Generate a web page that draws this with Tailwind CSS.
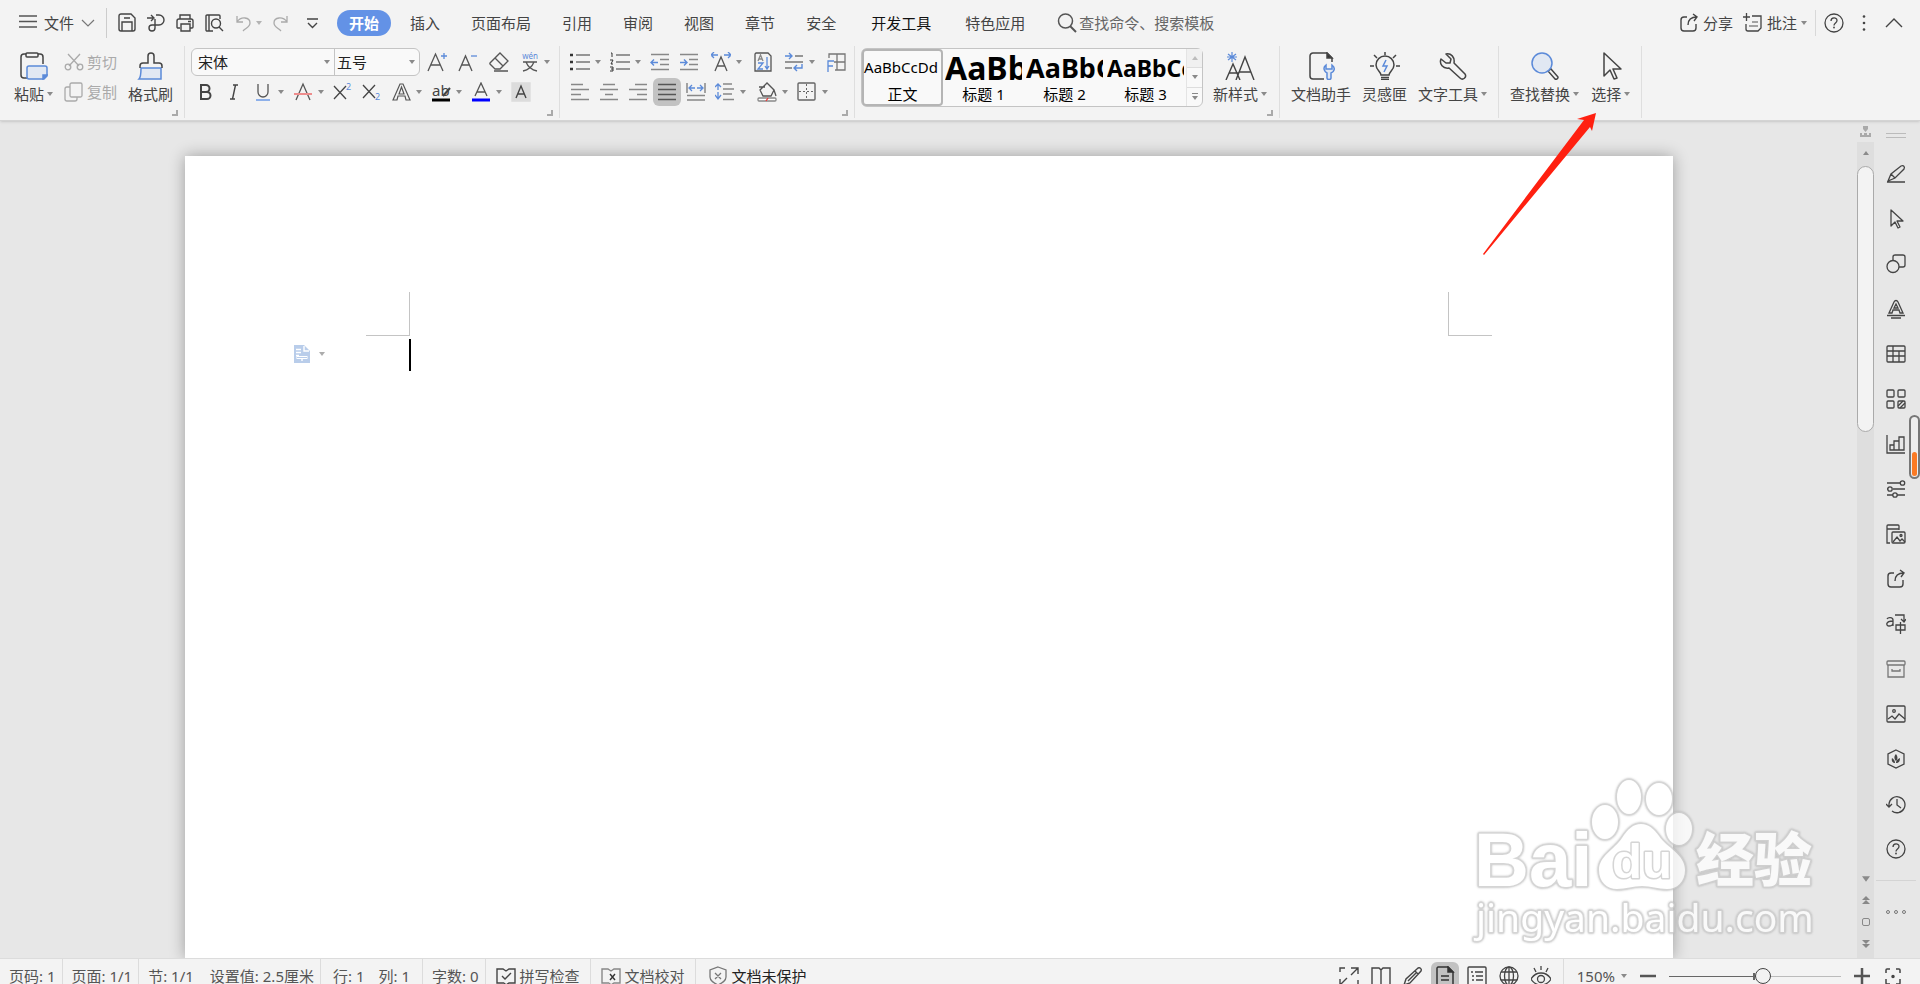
<!DOCTYPE html>
<html lang="zh-CN">
<head>
    <meta charset="UTF-8">
    <meta name="viewport" content="width=device-width, initial-scale=1.0">
    <title>文字文稿1</title>
    <script src="https://cdn.jsdelivr.net/npm/@tailwindcss/browser@4"></script>
</head>
<body class="relative flex h-screen flex-col overflow-hidden bg-[#e7e7e7] font-['Noto_Sans','Noto_Sans_CJK_SC',sans-serif] text-[15px] leading-5 text-[#444]">

    <!-- Shared shapes -->
    <svg class="hidden">
        <symbol id="caret" viewBox="0 0 6 4"><path d="M0 0h6L3 4z" fill="#8a8a8a"/></symbol>
        <symbol id="corner" viewBox="0 0 6 6"><path d="M5 0v5H0" fill="none" stroke="#aaa" stroke-width="2"/></symbol>
        <symbol id="share" viewBox="0 0 20 20"><path d="M8 4H5a3 3 0 0 0-3 3v8a3 3 0 0 0 3 3h9a3 3 0 0 0 3-3v-4M9 12c0-5 3-8 9-8M14 1l4 3-3 4" fill="none" stroke="#444" stroke-width="1.4"/></symbol>
        <symbol id="help" viewBox="0 0 20 20"><g fill="none" stroke="#444" stroke-width="1.3"><circle cx="10" cy="10" r="9"/><path d="M7 8c0-4 6-4 6-.5 0 2.500-3 2.500-3 5"/></g><circle cx="10" cy="14.500" r=".9" fill="#444"/></symbol>
    </svg>

    <header class="relative z-10 shrink-0 border-b border-[#d4d4d4] bg-[#f3f3f3] shadow">
        <!-- Menu bar -->
        <div class="flex h-[46px] items-center py-0.5 pr-4">
            <button class="flex items-center gap-1.5 pl-[18px]">
                <svg class="h-5 w-5" viewBox="0 0 20 20" fill="none" stroke="#555" stroke-width="1.300"><path d="M1 3h18M1 8.500h18M1 14h18"/></svg>
                <span>文件</span>
                <svg class="h-5 w-4" viewBox="0 0 16 20" fill="none" stroke="#777" stroke-width="1.200"><path d="M2 7l6 6 6-6"/></svg>
            </button>
            <span class="mx-2.5 h-[30px] w-px bg-[#ccc]"></span>

            <div class="flex items-center gap-[9px]">
                <button aria-label="保存"><svg class="h-5 w-5" viewBox="0 0 20 20" fill="none" stroke="#444" stroke-width="1.400"><path d="M4 1h10l4 4v11a2 2 0 0 1-2 2H4a2 2 0 0 1-2-2V3a2 2 0 0 1 2-2zM5 18V9h10v9M7 5h6"/></svg></button>
                <button aria-label="输出为PDF"><svg class="h-5 w-5" viewBox="0 0 20 20" fill="none" stroke="#444" stroke-width="1.400"><path d="M1 5h6M5 2l3 3-3 3M10 2h3a5 5 0 0 1 0 10H6a3 3 0 1 0 3 3V6"/></svg></button>
                <button aria-label="打印"><svg class="h-5 w-5" viewBox="0 0 20 20" fill="none" stroke="#444" stroke-width="1.400"><path d="M5 6V2h10v4M5 15H3a1 1 0 0 1-1-1V8a2 2 0 0 1 2-2h12a2 2 0 0 1 2 2v6a1 1 0 0 1-1 1h-2M6 11h9v7H6zM13 8.500h3"/></svg></button>
                <button aria-label="打印预览"><svg class="h-5 w-5" viewBox="0 0 20 20" fill="none" stroke="#444" stroke-width="1.400"><path d="M9 18H3a1 1 0 0 1-1-1V3a1 1 0 0 1 1-1h12a1 1 0 0 1 1 1v3M5 2v16M15 14l4 4"/><circle cx="12" cy="10.500" r="4.500"/></svg></button>
                <button aria-label="撤消" class="flex items-center gap-[3px]">
                    <svg class="h-5 w-5" viewBox="0 0 20 20" fill="none" stroke="#aaa" stroke-width="1.300"><path d="M4 3v6h6M4 9c4-6 13-5 13 1 0 4-4 5-7 8"/></svg>
                    <svg class="h-1 w-1.5 opacity-60"><use href="#caret"/></svg>
                </button>
                <button aria-label="恢复"><svg class="h-5 w-5" viewBox="0 0 20 20" fill="none" stroke="#aaa" stroke-width="1.300"><path d="M16 3v6h-6M16 9C12 3 3 4 3 10c0 4 4 5 7 8"/></svg></button>
                <button aria-label="自定义" class="ml-0.5"><svg class="h-5 w-5" viewBox="0 0 20 20" fill="none" stroke="#444" stroke-width="1.400"><path d="M5 6h11M6 10l4.500 4.500L15 10"/></svg></button>
            </div>

            <nav class="ml-[15px] flex items-center gap-[7px]">
                <button class="rounded-full bg-[#6392e6] px-3 py-[3px] font-bold text-white">开始</button>
                <button class="px-3">插入</button>
                <button class="px-3">页面布局</button>
                <button class="px-3">引用</button>
                <button class="px-3">审阅</button>
                <button class="px-3">视图</button>
                <button class="px-3">章节</button>
                <button class="px-3">安全</button>
                <button class="ml-1 px-3 text-[#111]">开发工具</button>
                <button class="ml-[3px] px-3">特色应用</button>
            </nav>

            <label class="ml-5 flex items-center gap-0.5">
                <svg class="h-5 w-5" viewBox="0 0 20 20" fill="none" stroke="#555" stroke-width="1.500"><circle cx="8.500" cy="8" r="7"/><path d="M13 13l6 6" stroke-width="2"/></svg>
                <input type="text" aria-label="查找" placeholder="查找命令、搜索模板" class="w-40 placeholder:text-[#666]">
            </label>

            <div class="ml-auto flex items-center gap-2.5">
                <button class="flex items-center gap-1"><svg class="h-5 w-5"><use href="#share"/></svg>分享</button>
                <button class="flex items-center gap-1">
                    <svg class="h-5 w-5" viewBox="0 0 20 20" fill="none" stroke="#444" stroke-width="1.300"><path d="M0 4h7M3.500 0v8M9 3h9v12l-3 3H5a2 2 0 0 1-2-2v-5"/><path d="M9 9h6M6 13h9" stroke="#888"/></svg>
                    批注
                    <svg class="h-1 w-1.5"><use href="#caret"/></svg>
                </button>
                <span class="-mx-0.5 h-[26px] w-px bg-[#d8d8d8]"></span>
                <button aria-label="帮助"><svg class="h-5 w-5"><use href="#help"/></svg></button>
                <button aria-label="更多"><svg class="h-5 w-5" viewBox="0 0 20 20" fill="#444"><circle cx="10" cy="3.500" r="1.300"/><circle cx="10" cy="10" r="1.300"/><circle cx="10" cy="16.500" r="1.300"/></svg></button>
                <button aria-label="收起功能区"><svg class="h-5 w-5" viewBox="0 0 20 20" fill="none" stroke="#444" stroke-width="1.400"><path d="M2 14l8-8 8 8"/></svg></button>
            </div>
        </div>

        <!-- Ribbon -->
        <div class="flex h-[74px] pb-0.5">
            <!-- Clipboard -->
            <section class="relative flex gap-[11px] border-r border-[#dedede] pr-[11px] pl-[14px]">
                <button class="flex flex-col items-center gap-1 pt-1.5">
                    <svg class="h-7 w-7" viewBox="0 0 28 28" fill="none" stroke="#444" stroke-width="1.500"><path d="M8 26H4a3 3 0 0 1-3-3V5a3 3 0 0 1 3-3h16a3 3 0 0 1 3 3v7"/><rect x="6" y="1" width="12" height="4" rx="1" fill="#f3f3f3"/><path d="M7 16a2 2 0 0 1 2-2h16a2 2 0 0 1 2 2v8l-3 3H9a2 2 0 0 1-2-2z" fill="#e1e8f3" stroke="#5b8ad9"/><path d="M27 23l-4 4v-4z" fill="#5b8ad9" stroke="#5b8ad9"/></svg>
                    <span class="flex items-center gap-[3px]">粘贴<svg class="h-1 w-1.5"><use href="#caret"/></svg></span>
                </button>
                <div class="flex flex-col gap-2.5 pt-1.5 text-[#aaa]">
                    <button class="flex items-center gap-[3px]"><svg class="h-5 w-5" viewBox="0 0 20 20" fill="none" stroke="#aaa" stroke-width="1.300"><path d="M4 2l11 12M16 2L5 14"/><circle cx="4" cy="15" r="2.800"/><circle cx="16" cy="15" r="2.800"/></svg>剪切</button>
                    <button class="flex items-center gap-[3px]"><svg class="h-5 w-5" viewBox="0 0 20 20" fill="none" stroke="#aaa" stroke-width="1.300"><rect x="6" y="1" width="12" height="14" rx="1.500"/><path d="M6 5H3a2 2 0 0 0-2 2v10a2 2 0 0 0 2 2h8a2 2 0 0 0 2-2v-2"/></svg>复制</button>
                </div>
                <button class="flex flex-col items-center gap-1 pt-1.5">
                    <svg class="h-7 w-7" viewBox="0 0 28 28" fill="none" stroke="#444" stroke-width="1.500"><path d="M4 16h20v11H2c2-2 2-5 2-11z" fill="#e1e8f3" stroke="#5b8ad9"/><path d="M3 16v-2a3 3 0 0 1 3-3h5V4a3 3 0 0 1 6 0v7h5a3 3 0 0 1 3 3v2"/></svg>
                    <span>格式刷</span>
                </button>
                <svg class="absolute right-1.5 bottom-0.5 h-1.5 w-1.5"><use href="#corner"/></svg>
            </section>

            <!-- Font -->
            <section class="relative flex flex-col gap-0.5 border-r border-[#dedede] pt-0.5 pr-[9px] pl-1.5">
                <div class="flex h-7 items-center">
                    <div class="mr-[7px] flex h-7 rounded-md border border-[#c4c4c4] bg-[#f9f9f9] text-[#222]">
                        <label class="flex items-center border-r border-[#c4c4c4] pr-1">
                            <select aria-label="字体" class="w-[132px] appearance-none pl-1.5"><option>宋体</option></select>
                            <svg class="h-1 w-1.5"><use href="#caret"/></svg>
                        </label>
                        <label class="flex items-center pr-1">
                            <select aria-label="字号" class="w-[74px] appearance-none pl-0.5"><option>五号</option></select>
                            <svg class="h-1 w-1.5"><use href="#caret"/></svg>
                        </label>
                    </div>
                    <div class="flex items-center gap-[11px]">
                        <button aria-label="增大字号"><svg class="h-5 w-5" viewBox="0 0 20 20" fill="none" stroke="#555" stroke-width="1.300"><path d="M1 19L8.500 2 16 19M4 13h9"/><path d="M14 4h6M17 1v6" stroke="#5b8ad9"/></svg></button>
                        <button aria-label="减小字号"><svg class="h-5 w-5" viewBox="0 0 20 20" fill="none" stroke="#555" stroke-width="1.300"><path d="M1 19L7.500 4 14 19M3.500 13h8"/><path d="M13 4h6" stroke="#5b8ad9"/></svg></button>
                        <button aria-label="清除格式"><svg class="h-5 w-5" viewBox="0 0 20 20" fill="none" stroke="#555" stroke-width="1.300"><path d="M6 17l-5-5a1 1 0 0 1 0-1L11 1l8 8-8 8zM6 6l8 8M5 19h14"/></svg></button>
                        <button aria-label="拼音指南" class="flex items-center gap-1">
                            <svg class="h-5 w-5 overflow-visible" viewBox="0 0 20 20"><text x="10" y="7" font-size="8" text-anchor="middle" fill="#5b8ad9">wén</text><path d="M3 10h14M14 10c-2 5-6 8-11 9M6 10c2 5 6 8 11 9" fill="none" stroke="#555" stroke-width="1.300"/></svg>
                            <svg class="h-1 w-1.5"><use href="#caret"/></svg>
                        </button>
                    </div>
                </div>
                <div class="flex h-7 items-center gap-[9px] pl-1">
                    <button aria-label="加粗"><svg class="h-5 w-5" viewBox="0 0 20 20" fill="none" stroke="#444" stroke-width="2"><path d="M6 3h5a3.500 3.500 0 0 1 0 7H6zM6 10h6a3.500 3.500 0 0 1 0 7H6z"/></svg></button>
                    <button aria-label="倾斜"><svg class="h-5 w-5" viewBox="0 0 20 20" fill="none" stroke="#444" stroke-width="1.400"><path d="M9 3h5M6 17h5M11.500 3l-3 14"/></svg></button>
                    <button aria-label="下划线" class="flex items-center gap-[5px]"><svg class="h-5 w-5" viewBox="0 0 20 20" fill="none" stroke="#555" stroke-width="1.300"><path d="M5 2v8a5 5 0 0 0 10 0V2"/><path d="M3 18h14" stroke="#8db0ea" stroke-width="2"/></svg><svg class="h-1 w-1.5"><use href="#caret"/></svg></button>
                    <button aria-label="删除线" class="flex items-center gap-[5px]"><svg class="h-5 w-5" viewBox="0 0 20 20" fill="none" stroke="#555" stroke-width="1.300"><path d="M3 18L10 2l7 16"/><path d="M1 12h18" stroke="#ee8d8d" stroke-width="2"/></svg><svg class="h-1 w-1.5"><use href="#caret"/></svg></button>
                    <button aria-label="上标"><svg class="h-5 w-5 overflow-visible" viewBox="0 0 20 20"><path d="M1 4l12 13M13 4L1 17" stroke="#444" stroke-width="1.300"/><text x="13" y="8" font-size="9" fill="#5b8ad9">2</text></svg></button>
                    <button aria-label="下标"><svg class="h-5 w-5 overflow-visible" viewBox="0 0 20 20"><path d="M1 3l12 13M13 3L1 16" stroke="#444" stroke-width="1.300"/><text x="13" y="18" font-size="9" fill="#5b8ad9">2</text></svg></button>
                    <button aria-label="文字效果" class="flex items-center gap-[5px]"><svg class="h-5 w-5" viewBox="0 0 20 20" fill="none" stroke="#555" stroke-width="1.200"><path d="M2 18L9 2h3l7 16h-4l-1-4H7l-1 4zM8 12l2.500-7L13 12z"/></svg><svg class="h-1 w-1.5"><use href="#caret"/></svg></button>
                    <button aria-label="突出显示" class="flex items-center gap-[5px]"><svg class="h-5 w-5" viewBox="0 0 20 20"><text x="1" y="14" font-size="15" fill="#444">ab</text><path d="M12 14l7-8" stroke="#444" stroke-width="2"/><path d="M1 18h18" stroke="#000" stroke-width="3"/></svg><svg class="h-1 w-1.5"><use href="#caret"/></svg></button>
                    <button aria-label="字体颜色" class="flex items-center gap-[5px]"><svg class="h-5 w-5" viewBox="0 0 20 20" fill="none" stroke="#555" stroke-width="1.300"><path d="M4 14l6-13 6 13M6 10h8"/><path d="M1 18h18" stroke="#00f" stroke-width="3"/></svg><svg class="h-1 w-1.5"><use href="#caret"/></svg></button>
                    <button aria-label="字符底纹"><svg class="h-5 w-5" viewBox="0 0 20 20" fill="none" stroke="#444" stroke-width="1.400"><path d="M1 1h18v18H1z" fill="#dcdcdc" stroke="#dcdcdc"/><path d="M5 16l5-12 5 12M7 12h6"/></svg></button>
                </div>
                <svg class="absolute right-1.5 bottom-0.5 h-1.5 w-1.5"><use href="#corner"/></svg>
            </section>

            <!-- Paragraph -->
            <section class="relative flex flex-col gap-0.5 border-r border-[#dedede] pt-0.5 pr-2 pl-2.5">
                <div class="flex h-7 items-center gap-3">
                    <div class="flex items-center gap-[9px]">
                        <button aria-label="项目符号" class="flex items-center gap-[5px]"><svg class="h-5 w-5" viewBox="0 0 20 20" fill="none" stroke="#777" stroke-width="1.400"><path d="M6 3h14M6 10h14M6 17h14"/><path d="M0 3h3M0 10h3M0 17h3" stroke="#333" stroke-width="2.500"/></svg><svg class="h-1 w-1.5"><use href="#caret"/></svg></button>
                        <button aria-label="编号" class="flex items-center gap-[5px]"><svg class="h-5 w-5" viewBox="0 0 20 20" fill="none" stroke="#777" stroke-width="1.400"><path d="M6 3h14M6 10h14M6 17h14"/><path d="M1 1h1v4M0 8h3L1 12h2M0 15h3v4H0M1 17h2" stroke="#333" stroke-width="1"/></svg><svg class="h-1 w-1.5"><use href="#caret"/></svg></button>
                        <button aria-label="减少缩进"><svg class="h-5 w-5" viewBox="0 0 20 20" fill="none" stroke="#888" stroke-width="1.400"><path d="M1 2.500h18M10 7.500h9M10 12.500h9M1 17.500h18"/><path d="M8 10.500H1M4 7.500l-3 3 3 3" stroke="#5b8ad9"/></svg></button>
                        <button aria-label="增加缩进"><svg class="h-5 w-5" viewBox="0 0 20 20" fill="none" stroke="#888" stroke-width="1.400"><path d="M1 2.500h18M10 7.500h9M10 12.500h9M1 17.500h18"/><path d="M1 10.500h7M5 7.500l3 3-3 3" stroke="#5b8ad9"/></svg></button>
                    </div>
                    <div class="flex items-center gap-[11px]">
                        <button aria-label="中文版式" class="flex items-center gap-[5px]"><svg class="h-5 w-5" viewBox="0 0 20 20" fill="none" stroke="#555" stroke-width="1.300"><path d="M4 19l6-14 6 14M6 14h8"/><path d="M7 3H1M3 0L0 3l3 3M13 3h6M17 0l3 3-3 3" stroke="#5b8ad9"/></svg><svg class="h-1 w-1.5"><use href="#caret"/></svg></button>
                        <button aria-label="排序"><svg class="h-5 w-5" viewBox="0 0 20 20" fill="none" stroke="#555" stroke-width="1.300"><path d="M3 1h12l3 3v15H2V2z"/><path d="M5 9l2.500-6L10 9M6 7h3" stroke="#888"/><path d="M5 11h5l-5 6h5M14 5v12M12 14l2 3 2-3" stroke="#5b8ad9"/></svg></button>
                        <button aria-label="换行" class="flex items-center gap-[5px]"><svg class="h-5 w-5" viewBox="0 0 20 20" fill="none" stroke="#777" stroke-width="1.400"><path d="M11 4h8M1 10h18M1 16h7"/><path d="M1 4h7M5 1l3 3-3 3M18 12v4h-8M13 13l-3 3 3 3" stroke="#5b8ad9"/></svg><svg class="h-1 w-1.5"><use href="#caret"/></svg></button>
                        <button aria-label="制表位"><svg class="h-5 w-5" viewBox="0 0 20 20" fill="none" stroke="#777" stroke-width="1.300"><path d="M3 6V2h16v16H9M11 2v16M8 10h11"/><path d="M2 20V9h6M2 14h5" stroke="#5b8ad9"/></svg></button>
                    </div>
                </div>
                <div class="flex h-7 items-center gap-[11px]">
                    <div class="flex items-center gap-[9px]">
                        <button aria-label="左对齐"><svg class="h-5 w-5" viewBox="0 0 20 20" stroke="#888" stroke-width="1.500"><path d="M1 2.500h12M1 7.500h18M1 12.500h10M1 17.500h18"/></svg></button>
                        <button aria-label="居中"><svg class="h-5 w-5" viewBox="0 0 20 20" stroke="#888" stroke-width="1.500"><path d="M4 2.500h12M1 7.500h18M6 12.500h8M1 17.500h18"/></svg></button>
                        <button aria-label="右对齐"><svg class="h-5 w-5" viewBox="0 0 20 20" stroke="#888" stroke-width="1.500"><path d="M7 2.500h12M1 7.500h18M9 12.500h10M1 17.500h18"/></svg></button>
                        <button aria-label="两端对齐" class="-mx-1 rounded-md bg-[#c2c2c2] p-1"><svg class="h-5 w-5" viewBox="0 0 20 20" stroke="#555" stroke-width="1.500"><path d="M1 2.500h18M1 7.500h18M1 12.500h18M1 17.500h18"/></svg></button>
                        <button aria-label="分散对齐"><svg class="h-5 w-5" viewBox="0 0 20 20" fill="none" stroke="#888" stroke-width="1.500"><path d="M1 1v10M19 1v10M1 13.500h18M1 18h18"/><path d="M4 6h5M6 3L3 6l3 3M11 6h5M14 3l3 3-3 3" stroke="#5b8ad9" stroke-width="1.300"/></svg></button>
                        <button aria-label="行距" class="flex items-center gap-[5px]"><svg class="h-5 w-5" viewBox="0 0 20 20" fill="none" stroke="#888" stroke-width="1.500"><path d="M8 2h9M8 7h11M8 12h9M8 17.500h11"/><path d="M3 2v6M0 5l3-3 3 3M3 10v7M0 13l3 4 3-4" stroke="#5b8ad9" stroke-width="1.300"/></svg><svg class="h-1 w-1.5"><use href="#caret"/></svg></button>
                    </div>
                    <div class="flex items-center gap-[9px]">
                        <button aria-label="底纹颜色" class="flex items-center gap-[5px]"><svg class="h-5 w-5" viewBox="0 0 20 20" fill="none" stroke="#555" stroke-width="1.300"><path d="M3 8l7-7 7 7-3 6H6zM2 5l6 0M17 8l2 6"/><rect x="1" y="16" width="18" height="3" rx="1" fill="#fff" stroke="#888"/><path d="M9 19l2-3" stroke="#e33"/></svg><svg class="h-1 w-1.5"><use href="#caret"/></svg></button>
                        <button aria-label="边框" class="flex items-center gap-[5px]"><svg class="h-5 w-5" viewBox="0 0 20 20" fill="none" stroke="#666" stroke-width="1.400"><rect x="1" y="1" width="17" height="17" rx="1"/><path d="M9.500 2v16M2 9.500h16" stroke-dasharray="2 2" stroke-width="1"/></svg><svg class="h-1 w-1.5"><use href="#caret"/></svg></button>
                    </div>
                </div>
                <svg class="absolute right-1.5 bottom-0.5 h-1.5 w-1.5"><use href="#corner"/></svg>
            </section>

            <!-- Styles -->
            <section class="relative flex gap-2.5 border-r border-[#dedede] pr-3 pl-1.5">
                <div class="mt-0.5 flex h-[59px] w-[342px] rounded-md border border-[#c4c4c4] bg-[#f9f9f9] text-black">
                    <button class="flex w-[81px] flex-col rounded-sm border-2 border-[#b5b5b5]">
                        <span class="h-[33px] w-full text-left leading-8">AaBbCcDd</span>
                        <span class="w-full">正文</span>
                    </button>
                    <button class="flex w-[81px] flex-col px-0.5 pt-0.5">
                        <span class="h-[33px] w-full overflow-hidden text-left text-[32px] leading-[34px] font-bold">AaBb</span>
                        <span class="w-full">标题 1</span>
                    </button>
                    <button class="flex w-[81px] flex-col px-0.5 pt-0.5">
                        <span class="h-[33px] w-full overflow-hidden text-left text-[27px] leading-[34px] font-bold">AaBbC</span>
                        <span class="w-full">标题 2</span>
                    </button>
                    <button class="flex w-[81px] flex-col px-0.5 pt-0.5">
                        <span class="h-[33px] w-full overflow-hidden text-left text-[23px] leading-[34px] font-bold">AaBbCc</span>
                        <span class="w-full">标题 3</span>
                    </button>
                    <div class="flex flex-1 flex-col divide-y divide-[#ddd] border-l border-[#e4e4e4]">
                        <button aria-label="上一行" class="flex flex-1 items-center justify-center bg-[#f0f0f0]"><svg class="h-1 w-1.5 rotate-180 opacity-50"><use href="#caret"/></svg></button>
                        <button aria-label="下一行" class="flex flex-1 items-center justify-center"><svg class="h-1 w-1.5"><use href="#caret"/></svg></button>
                        <button aria-label="更多样式" class="flex flex-1 flex-col items-center justify-center gap-0.5"><span class="h-px w-1.5 bg-[#888]"></span><svg class="h-1 w-1.5"><use href="#caret"/></svg></button>
                    </div>
                </div>
                <button class="flex flex-col items-center gap-1 pt-1.5">
                    <svg class="h-7 w-8" viewBox="0 0 32 28" fill="none" stroke="#444" stroke-width="1.400"><path d="M2 28l7-16 7 16M5 21h10M12 28l9-23 9 23M15 20h12"/><path d="M8 0v10M4 2l8 6M12 2L4 8M3 5h10" stroke="#5b8ad9" stroke-width="1.200"/></svg>
                    <span class="flex items-center gap-[3px]">新样式<svg class="h-1 w-1.5"><use href="#caret"/></svg></span>
                </button>
                <svg class="absolute right-1.5 bottom-0.5 h-1.5 w-1.5"><use href="#corner"/></svg>
            </section>

            <!-- Assistants -->
            <section class="flex gap-[11px] border-r border-[#dedede] px-[11px]">
                <button class="flex flex-col items-center gap-1 pt-1.5">
                    <svg class="h-7 w-7" viewBox="0 0 28 28" fill="none" stroke="#444" stroke-width="1.500"><path d="M17 27H6a3 3 0 0 1-3-3V4a3 3 0 0 1 3-3h14l5 5v4"/><path d="M20 1v5h5z" fill="#333"/><path d="M19 13c-4 3-1 7 1 8v5c0 2 4 2 4 0v-5c3-1 5-5 1-8v4h-6z" fill="#e1e8f3" stroke="#5b8ad9"/></svg>
                    <span>文档助手</span>
                </button>
                <button class="flex flex-col items-center gap-1 pt-1.5">
                    <svg class="h-7 w-[30px]" viewBox="0 0 30 28" fill="none" stroke="#444" stroke-width="1.500"><path d="M11 23c0-3-5-5-5-10a9 9 0 0 1 18 0c0 5-5 7-5 10zM11 25.500h8M11 27.500h8M15 0v3M4 3l3 3M26 3l-3 3M0 14h4M26 14h4"/><path d="M16 8l-3 6h4l-3 6" stroke="#5b8ad9"/></svg>
                    <span>灵感匣</span>
                </button>
                <button class="flex flex-col items-center gap-1 pt-1.5">
                    <svg class="h-7 w-7" viewBox="0 0 28 28" fill="none" stroke="#444" stroke-width="1.500"><path d="M7 2l5 5-1 4-4 0-5-4c-2 5 2 10 8 9l11 10c3 3 7-1 5-4L15 11c1-6-3-10-8-9z" stroke-linejoin="round"/></svg>
                    <span class="flex items-center gap-[3px]">文字工具<svg class="h-1 w-1.5"><use href="#caret"/></svg></span>
                </button>
            </section>

            <!-- Editing -->
            <section class="flex gap-3 border-r border-[#dedede] px-[11px]">
                <button class="flex flex-col items-center gap-1 pt-1.5">
                    <svg class="h-7 w-7" viewBox="0 0 28 28" fill="none" stroke="#444" stroke-width="1.500"><path d="M17 19l3-2 7 8a2 2 0 0 1-3 2z"/><circle cx="11" cy="11" r="10" fill="#e1e8f3" stroke="#5b8ad9"/></svg>
                    <span class="flex items-center gap-[3px]">查找替换<svg class="h-1 w-1.5"><use href="#caret"/></svg></span>
                </button>
                <button class="flex flex-col items-center gap-1 pt-1.5">
                    <svg class="h-7 w-7" viewBox="0 0 28 28" fill="none" stroke="#444" stroke-width="1.500" stroke-linejoin="round"><path d="M7 1v23l6-6 4 9 3-1-4-9h8z"/></svg>
                    <span class="flex items-center gap-[3px]">选择<svg class="h-1 w-1.5"><use href="#caret"/></svg></span>
                </button>
            </section>
        </div>
    </header>

    <div class="flex min-h-0 flex-1">
        <!-- Document -->
        <main class="flex-1 pt-[35px] pr-[184px] pl-[185px]">
            <article class="h-full bg-white pt-[136px] shadow-[0_0_15px_rgba(0,0,0,0.32)]">
                <div class="flex justify-between px-[181px]">
                    <span class="h-11 w-11 border-r border-b border-[#c4c4c4]"></span>
                    <span class="h-11 w-11 border-b border-l border-[#c4c4c4]"></span>
                </div>
                <div class="flex pt-[3px] pl-[109px]">
                    <button aria-label="页面设置" class="flex w-[115px] items-center gap-[9px] self-start pt-1.5">
                        <svg class="h-[18px] w-4" viewBox="0 0 16 18"><path d="M0 0h10l6 6v12H0z" fill="#b9cdea"/><path d="M10 1v5h5M2 4.500h5M2 7.500h5M2 10.500h3M8 14v2" fill="none" stroke="#fff" stroke-width="1.400"/><rect x="3" y="11.500" width="10" height="2" fill="none" stroke="#fff"/></svg>
                        <svg class="h-1 w-1.5 opacity-70"><use href="#caret"/></svg>
                    </button>
                    <span class="h-8 w-0.5 bg-black"></span>
                </div>
            </article>
        </main>

        <!-- Vertical scroll bar -->
        <div class="flex w-[17px] flex-col items-center">
            <svg class="my-[5px] h-[11px] w-[11px]" viewBox="0 0 11 11" fill="#aaa"><path d="M3 0h5v3L5.500 6 3 3zM0 7h2v2h2V7h3v2h2V7h2v4H0z"/></svg>
            <div class="flex w-full flex-1 flex-col items-center bg-[#dedede] pt-[9px]">
                <svg class="h-1 w-1.5 rotate-180"><use href="#caret"/></svg>
                <div class="mt-[11px] h-[266px] w-full rounded-full border border-[#aaa] bg-[#f3f3f3]"></div>
                <div class="mt-auto flex flex-col items-center gap-3.5 pb-2.5">
                    <svg class="h-1.5 w-2"><use href="#caret"/></svg>
                    <svg class="h-2 w-2" viewBox="0 0 8 8" fill="#888"><path d="M0 4l4-4 4 4zM0 8l4-4 4 4z"/></svg>
                    <span class="h-2 w-2 rounded-xs border border-[#888]"></span>
                    <svg class="h-2 w-2" viewBox="0 0 8 8" fill="#888"><path d="M0 0l4 4 4-4zM0 4l4 4 4-4z"/></svg>
                </div>
            </div>
        </div>

        <!-- Side tool strip -->
        <aside class="relative flex w-[46px] flex-col items-center pt-3 pr-0.5">
            <span class="h-[5px] w-5 border-y border-[#bbb]"></span>
            <div class="mt-[26px] flex flex-col gap-[25px]">
                <button aria-label="编辑"><svg class="h-5 w-5" viewBox="0 0 20 20" fill="none" stroke="#444" stroke-width="1.300"><path d="M1 18h18M2 17l3-7L15 2c3-1 4 1 3 3L9 14zM5 10l4 4"/></svg></button>
                <button aria-label="选择工具"><svg class="h-5 w-5" viewBox="0 0 20 20" fill="none" stroke="#444" stroke-width="1.300" stroke-linejoin="round"><path d="M5 1v16l4-4 3 6 2-1-3-6h6z"/></svg></button>
                <button aria-label="形状"><svg class="h-5 w-5" viewBox="0 0 20 20" fill="none" stroke="#444" stroke-width="1.300"><circle cx="7" cy="12.500" r="6"/><path d="M7 6V3a2 2 0 0 1 2-2h8a2 2 0 0 1 2 2v8a2 2 0 0 1-2 2h-4"/></svg></button>
                <button aria-label="艺术字"><svg class="h-5 w-5" viewBox="0 0 20 20" fill="none" stroke="#444" stroke-width="1.300"><path d="M3 14L8 3c1-2 3-2 4 0l5 11h-3l-1-3H7l-1 3zM8 9l2-4 2 4zM1 16.500h18M5 19h10"/></svg></button>
                <button aria-label="表格"><svg class="h-5 w-5" viewBox="0 0 20 20" fill="none" stroke="#444" stroke-width="1.300"><rect x="1" y="2" width="18" height="16" rx="1"/><path d="M1 7h18M1 12h18M7 2v16M13 7v11"/></svg></button>
                <button aria-label="模块"><svg class="h-5 w-5" viewBox="0 0 20 20" fill="none" stroke="#444" stroke-width="1.300"><rect x="1" y="1" width="7" height="7" rx="1"/><rect x="12" y="1" width="7" height="7" rx="1"/><rect x="1" y="12" width="7" height="7" rx="1"/><rect x="12" y="12" width="7" height="7" rx="1"/><path d="M12 17l5-5M14 19l5-5"/></svg></button>
                <button aria-label="图表"><svg class="h-5 w-5" viewBox="0 0 20 20" fill="none" stroke="#444" stroke-width="1.300"><path d="M1 1v18h18M4 16v-5h4v5zM8 16V7h5v9zM13 16V3h5v13z"/></svg></button>
                <button aria-label="设置"><svg class="h-5 w-5" viewBox="0 0 20 20" fill="none" stroke="#444" stroke-width="1.300"><path d="M1 4h13M1 10h1M7 10h12M1 16h6M11 16h8"/><circle cx="16.500" cy="4" r="2.200"/><circle cx="4" cy="10" r="2.200"/><circle cx="9" cy="16" r="2.200"/></svg></button>
                <button aria-label="素材"><svg class="h-5 w-5" viewBox="0 0 20 20" fill="none" stroke="#444" stroke-width="1.300"><path d="M4 19H1V2a1 1 0 0 1 1-1h10a1 1 0 0 1 1 1v4M1 5h12"/><rect x="6" y="8" width="13" height="11" rx="1"/><path d="M7 18l4-5 3 4 2-2 3 3"/><circle cx="15" cy="11.500" r="1"/></svg></button>
                <button aria-label="分享文档"><svg class="h-5 w-5"><use href="#share"/></svg></button>
                <button aria-label="翻译"><svg class="h-5 w-5" viewBox="0 0 20 20" fill="none" stroke="#444" stroke-width="1.300"><path d="M1 5c1-2 6-2 6 1v6M7 7c-8 0-7 5-4 5 2 0 4-1 4-3M9 1h9v6M15 5l3 3 2-3M10 11h9v5h-9zM14.500 8v12"/></svg></button>
                <button aria-label="归档"><svg class="h-5 w-5" viewBox="0 0 20 20" fill="none" stroke="#777" stroke-width="1.300"><rect x="1" y="2" width="18" height="4" rx="1"/><path d="M2 6v12h16V6M6 10v2h8v-2"/></svg></button>
                <button aria-label="图片"><svg class="h-5 w-5" viewBox="0 0 20 20" fill="none" stroke="#444" stroke-width="1.300"><rect x="1" y="2" width="18" height="16" rx="1"/><path d="M2 15l4-3 3 3 4-5 6 5"/><circle cx="8" cy="7" r="1.300"/></svg></button>
                <button aria-label="资源"><svg class="h-5 w-5" viewBox="0 0 20 20" fill="none" stroke="#444" stroke-width="1.300"><path d="M10 1l8 4v10l-8 4-8-4V5z"/><path d="M10 5c-3 3-1 6 0 7 2-2 2-4 0-7zM6 9c-1 3 1 5 3 5 0-2-1-4-3-5zM14 9c-3 1-4 3-4 5 3 0 4-2 4-5z" fill="#444" stroke="none"/></svg></button>
                <button aria-label="历史"><svg class="h-5 w-5" viewBox="0 0 20 20" fill="none" stroke="#444" stroke-width="1.300"><path d="M3 13V10a8 8 0 1 1 3 7M0 10l3 3 3-3M11 5v6l4 3"/></svg></button>
                <button aria-label="帮助中心"><svg class="h-5 w-5"><use href="#help"/></svg></button>
            </div>
            <span class="mt-[21px] h-px w-10 bg-[#d4d4d4]"></span>
            <button aria-label="更多工具" class="mt-[29px] flex gap-1">
                <span class="h-1 w-1 rounded-full border border-[#777]"></span>
                <span class="h-1 w-1 rounded-full border border-[#777]"></span>
                <span class="h-1 w-1 rounded-full border border-[#777]"></span>
            </button>
            <div class="absolute top-[294px] right-0 flex h-16 w-[11px] items-end rounded-full border-2 border-[#777] bg-[#eee] p-px"><span class="h-6 w-full rounded-full bg-[#fb7a24]"></span></div>
        </aside>
    </div>

    <!-- Status bar -->
    <footer class="relative z-10 h-[26px] shrink-0 overflow-hidden border-t border-[#dcdcdc] bg-[#f3f3f3]">
        <div class="flex h-[34px] items-center text-[#555]">
            <span class="border-r border-[#dcdcdc] pr-1.5 pl-[9px] leading-[34px]">页码: 1</span>
            <span class="border-r border-[#dcdcdc] pr-1.5 pl-[9px] leading-[34px]">页面: 1/1</span>
            <span class="flex gap-4 border-r border-[#dcdcdc] pr-1.5 pl-[9px] leading-[34px]"><span>节: 1/1</span><span>设置值: 2.5厘米</span></span>
            <span class="flex gap-3.5 border-r border-[#dcdcdc] px-3 leading-[34px]"><span>行: 1</span><span>列: 1</span></span>
            <span class="border-r border-[#dcdcdc] pr-1.5 pl-[9px] leading-[34px]">字数: 0</span>
            <button class="flex h-[34px] items-center gap-1 border-r border-[#dcdcdc] px-2.5">
                <svg class="h-5 w-5" viewBox="0 0 20 20" fill="none" stroke="#444" stroke-width="1.400"><path d="M8 17H1V3h6l3 2 3-2h6v14h-6l-3 2-2-2M6 10l3 3 6-6"/></svg>拼写检查
            </button>
            <button class="flex h-[34px] items-center gap-1 border-r border-[#dcdcdc] px-2.5">
                <svg class="h-5 w-5" viewBox="0 0 20 20" fill="none" stroke="#888" stroke-width="1.400"><path d="M8 17H1V3h6l3 2 3-2h6v14h-6l-3 2-2-2"/><path d="M9 8l5 6M14 8l-5 6" stroke="#333"/></svg>文档校对
            </button>
            <button class="flex h-[34px] items-center gap-1 px-3 text-[#222]">
                <svg class="h-5 w-5" viewBox="0 0 20 20" fill="none" stroke="#777" stroke-width="1.300"><path d="M10 1l8 3v7c0 4-4 6-8 8-4-2-8-4-8-8V4zM7 7l6 6M13 7l-6 6"/></svg>文档未保护
            </button>

            <div class="ml-auto flex items-center gap-3">
                <button aria-label="全屏"><svg class="h-5 w-5" viewBox="0 0 20 20" fill="none" stroke="#444" stroke-width="1.400"><path d="M1 6V2h5M12 2h7v6M19 2l-7 7M1 13v6h6M1 19l7-7M19 14v5h-5"/></svg></button>
                <button aria-label="阅读版式"><svg class="h-5 w-5" viewBox="0 0 20 20" fill="none" stroke="#444" stroke-width="1.400"><path d="M10 4v15M1 19V2h7l2 2 2-2h7v17z"/></svg></button>
                <button aria-label="写作模式"><svg class="h-5 w-5" viewBox="0 0 20 20" fill="none" stroke="#444" stroke-width="1.400"><path d="M1 19l2-6L15 2c2-1 4 1 3 3L7 17zM12 5l3 3M5 15l8-8"/></svg></button>
                <button aria-label="页面视图" class="-mx-1 rounded-md bg-[#c2c2c2] p-1"><svg class="h-5 w-5" viewBox="0 0 20 20" fill="none" stroke="#333" stroke-width="1.500"><path d="M3 1h10l5 5v13H2V2z"/><path d="M13 1v5h5z" fill="#333"/><path d="M6 10h8M6 14h8"/></svg></button>
                <button aria-label="大纲"><svg class="h-5 w-5" viewBox="0 0 20 20" fill="none" stroke="#444" stroke-width="1.400"><rect x="1" y="1" width="18" height="18" rx="1"/><path d="M4 6h2M8 6h8M5 10h2M9 10h7M5 14h2M9 14h7"/></svg></button>
                <button aria-label="Web版式"><svg class="h-5 w-5" viewBox="0 0 20 20" fill="none" stroke="#444" stroke-width="1.300"><circle cx="10" cy="10" r="9"/><ellipse cx="10" cy="10" rx="4.500" ry="9"/><path d="M10 1v18M2 6h16M2 14h16"/></svg></button>
                <button aria-label="护眼模式"><svg class="h-5 w-5" viewBox="0 0 20 20" fill="none" stroke="#444" stroke-width="1.300"><path d="M0 13c5-8 15-8 20 0-5 8-15 8-20 0zM10 0v4M3 2l2 4M17 2l-2 4"/><circle cx="10" cy="13" r="3.500"/></svg></button>
            </div>
            <div class="ml-3 flex items-center gap-[13px] pr-[17px]">
                <span class="h-[34px] w-px bg-[#dcdcdc]"></span>
                <button class="flex items-center gap-1.5">150%<svg class="h-1 w-1.5"><use href="#caret"/></svg></button>
                <button aria-label="缩小"><svg class="h-5 w-4" viewBox="0 0 16 20"><path d="M0 10h16" stroke="#555" stroke-width="2.500"/></svg></button>
                <input type="range" aria-label="显示比例" min="0" max="100" value="55" class="h-4 w-[172px] appearance-none bg-[linear-gradient(90deg,transparent_49%,#666_49%,#666_50%,transparent_50%),linear-gradient(90deg,#666_55%,#bbb_55%)] bg-[length:100%_7px,100%_1px] bg-center bg-no-repeat [&::-webkit-slider-thumb]:h-4 [&::-webkit-slider-thumb]:w-4 [&::-webkit-slider-thumb]:appearance-none [&::-webkit-slider-thumb]:rounded-full [&::-webkit-slider-thumb]:border [&::-webkit-slider-thumb]:border-[#444] [&::-webkit-slider-thumb]:bg-[#f3f3f3]">
                <button aria-label="放大"><svg class="h-5 w-4" viewBox="0 0 16 20"><path d="M0 10h16M8 2v16" stroke="#555" stroke-width="2.500"/></svg></button>
                <button aria-label="最佳显示比例"><svg class="h-5 w-5" viewBox="0 0 20 20" fill="none" stroke="#444" stroke-width="1.500"><path d="M3 7V4a1 1 0 0 1 1-1h3M13 3h3a1 1 0 0 1 1 1v3M3 13v4a1 1 0 0 0 1 1h3M13 18h3a1 1 0 0 0 1-1v-4"/><circle cx="10" cy="10.500" r="1" fill="#444"/></svg></button>
            </div>
        </div>
    </footer>

    <!-- Pointer arrow over the ribbon -->
    <svg class="pointer-events-none absolute top-[113px] left-[1483px] z-20 h-[142px] w-[114px]" viewBox="0 0 114 142"><path d="M113 0L94 6l7 1L0 141l1 1L107 14l2 4z" fill="#ff2010"/></svg>

    <!-- Site watermark -->
    <svg class="pointer-events-none absolute right-[60px] bottom-[24px] z-0 h-[200px] w-[420px] font-['Liberation_Sans','Noto_Sans_CJK_SC',sans-serif] opacity-75 drop-shadow-[0_0_1px_#aaa]" viewBox="0 0 420 200" fill="#fff" stroke="#c8c8c8" stroke-width="3" paint-order="stroke" stroke-linejoin="round">
        <text x="34" y="126" font-size="76" font-weight="bold">Bai</text>
        <ellipse cx="165" cy="62" rx="13" ry="17"/>
        <ellipse cx="189" cy="37" rx="12" ry="17"/>
        <ellipse cx="219" cy="39" rx="13" ry="16"/>
        <ellipse cx="239" cy="69" rx="13" ry="16"/>
        <path d="M201 64c8 0 13 5 18 12 8 12 26 18 26 34 0 12-8 19-18 19-9 0-16-3-25-3s-16 3-25 3c-10 0-18-7-18-19 0-14 15-20 23-32 6-9 11-14 19-14z"/>
        <text x="172" y="118" font-size="49" font-weight="bold">du</text>
        <text x="256" y="121" font-size="58" font-weight="900">经验</text>
        <text x="36" y="172" font-size="39" class="font-['Noto_Sans']">jingyan.baidu.com</text>
    </svg>
</body>
</html>
